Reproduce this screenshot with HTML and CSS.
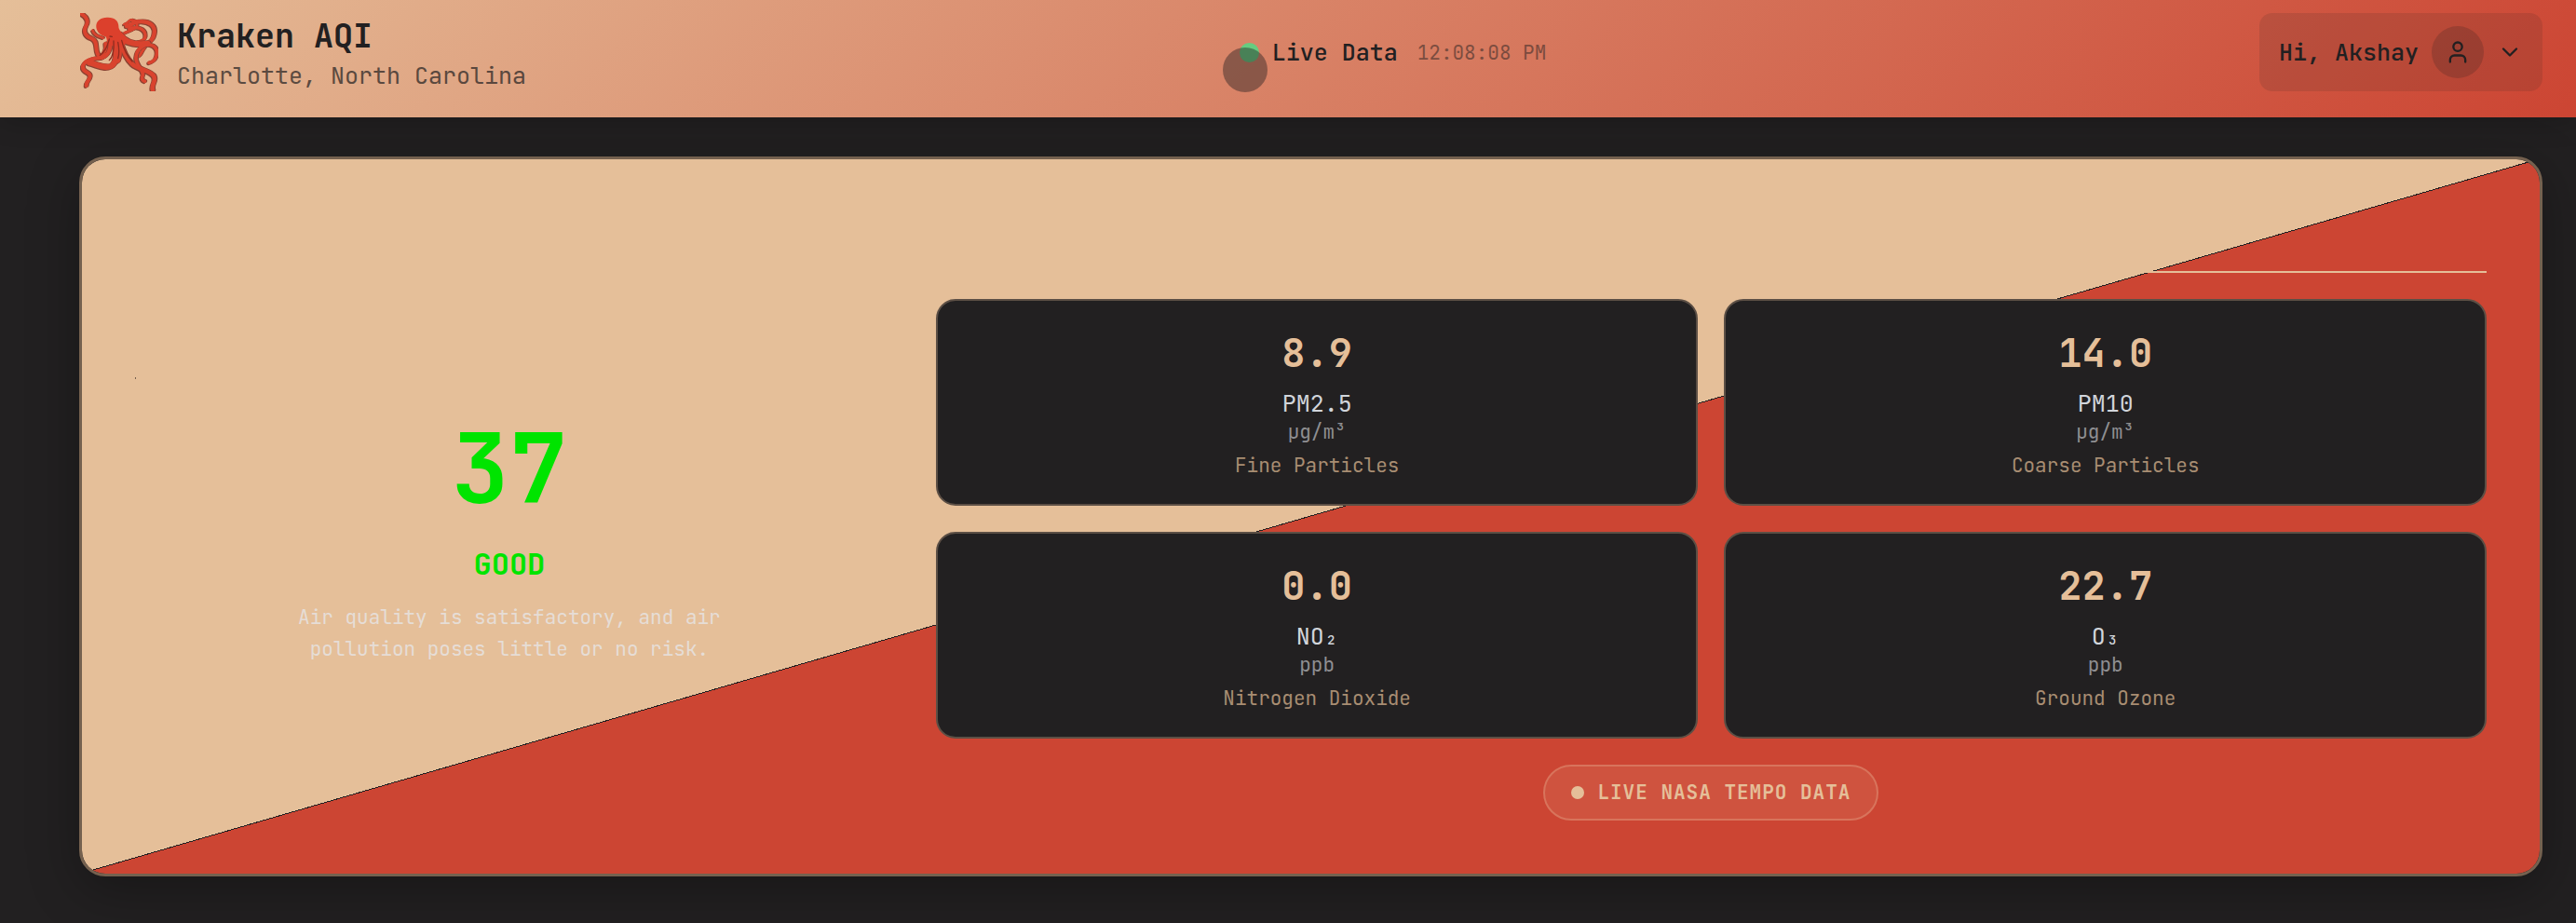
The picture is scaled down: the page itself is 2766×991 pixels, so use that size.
FILE: index.html
```html
<!DOCTYPE html>
<html lang="en">
<head>
<meta charset="utf-8">
<meta name="viewport" content="width=device-width, initial-scale=1">
<title>Kraken AQI</title>
<link rel="stylesheet" href="styles.css">
</head>
<body>
<header class="topbar">
  <div class="brand">
    <svg class="logo" viewBox="78 42 252 252" aria-hidden="true">
      <defs>
        <g id="arms-back">
          <path d="M212 112 C230 98 242 102 256 90 C268 80 258 66 244 64 C232 64 236 76 220 78" stroke-width="8"/>
          <path d="M228 84 C250 82 246 68 266 70 C300 66 324 82 316 112 C310 138 290 142 262 142" stroke-width="13"/>
          <path d="M236 92 C262 84 286 92 288 112 C290 128 276 134 262 136" stroke-width="10"/>
          <path d="M152 122 C134 116 122 112 118 98" stroke-width="8"/>
          <path d="M262 184 C276 180 276 162 286 154" stroke-width="9"/>
          <path d="M160 140 C164 158 158 172 142 184" stroke-width="12"/>
        </g>
        <g id="arms-front">
          <path d="M83 45 C100 54 106 70 97 84 C86 104 98 118 116 124 C136 132 126 156 134 172 C138 184 150 184 158 176" stroke-width="12"/>
          <path d="M176 136 C176 162 166 182 148 186 C124 188 96 190 87 212 C82 234 112 230 110 246 C108 262 98 260 98 276" stroke-width="12"/>
          <path d="M192 136 C194 166 200 196 180 212 C156 224 132 206 108 202" stroke-width="18"/>
          <path d="M206 112 C222 136 248 146 296 140" stroke-width="18"/>
          <path d="M208 132 C216 164 226 188 246 206 C268 226 306 226 316 246 C324 264 306 270 312 290" stroke-width="14"/>
          <path d="M300 202 C326 198 334 160 314 148 C290 136 260 154 258 184 C256 212 284 226 280 242 C274 254 280 260 286 262" stroke-width="11"/>
          <path d="M206 134 C206 160 208 176 200 196" stroke-width="14"/>
        </g>
      </defs>
      <g fill="none" stroke-linecap="round" stroke-linejoin="round">
        <g class="logo-edge"><use href="#arms-back" x="-3" y="3"/><use href="#arms-back" x="3" y="-1"/></g>
        <use class="logo-ink" href="#arms-back"/>
        <g class="logo-edge"><use href="#arms-front" x="-3" y="3"/><use href="#arms-front" x="3" y="-1"/></g>
        <use class="logo-ink" href="#arms-front"/>
      </g>
      <path class="logo-body" d="M130 88 C128 66 146 55 168 56 C190 56 202 68 202 84 C202 98 212 104 224 116 C232 126 226 146 212 152 C200 144 184 148 172 146 C160 136 168 128 160 118 C144 114 132 104 130 88 Z"/>
      <g class="logo-crease">
        <path d="M186 132 C188 160 186 180 172 194"/>
        <path d="M200 136 C204 156 204 176 200 188"/>
        <path d="M172 126 C166 150 158 168 142 178"/>
        <path d="M212 130 C218 156 228 180 246 198"/>
        <path d="M174 117 L181 118"/>
      </g>
    </svg>
    <div>
      <h1 class="brand-name">Kraken AQI</h1>
      <p class="brand-place">Charlotte, North Carolina</p>
    </div>
  </div>
  <div class="live">
    <span class="live-dot"><span class="live-pulse"></span></span>
    <span class="live-label">Live Data</span>
    <time class="live-time">12:08:08 PM</time>
  </div>
  <button class="user" type="button">
    <span>Hi, Akshay</span>
    <span class="avatar">
      <svg class="icon" viewBox="0 0 24 24" aria-hidden="true"><path d="M19 21v-2a4 4 0 0 0-4-4H9a4 4 0 0 0-4 4v2"/><circle cx="12" cy="7" r="4"/></svg>
    </span>
    <svg class="icon" viewBox="0 0 24 24" aria-hidden="true"><path d="m6 9 6 6 6-6"/></svg>
  </button>
</header>
<main class="page">
  <section class="panel">
    <div class="summary">
      <span class="summary-mark"></span>
      <p class="aqi">37</p>
      <p class="level">GOOD</p>
      <p class="advice">Air quality is satisfactory, and air pollution poses little or no risk.</p>
    </div>
    <div class="readings">
      <div class="readings-head"></div>
      <div class="tiles">
        <article class="tile">
          <p class="value">8.9</p>
          <h2 class="name">PM2.5</h2>
          <p class="unit">µg/m³</p>
          <p class="note">Fine Particles</p>
        </article>
        <article class="tile">
          <p class="value">14.0</p>
          <h2 class="name">PM10</h2>
          <p class="unit">µg/m³</p>
          <p class="note">Coarse Particles</p>
        </article>
        <article class="tile">
          <p class="value">0.0</p>
          <h2 class="name">NO<sub>2</sub></h2>
          <p class="unit">ppb</p>
          <p class="note">Nitrogen Dioxide</p>
        </article>
        <article class="tile">
          <p class="value">22.7</p>
          <h2 class="name">O<sub>3</sub></h2>
          <p class="unit">ppb</p>
          <p class="note">Ground Ozone</p>
        </article>
      </div>
      <p class="badge"><span class="badge-dot"></span>LIVE NASA TEMPO DATA</p>
    </div>
  </section>
</main>
</body>
</html>
```

FILE: styles.css
```css
:root {
  --tan: #e5bf99;
  --red: #cc4533;
  --ink: #222021;
  --edge: #75614f;
}

* {
  box-sizing: border-box;
}

body {
  margin: 0;
  min-height: 100vh;
  background: var(--ink);
  color: var(--ink);
  font-family: "JetBrains Mono", "DejaVu Sans Mono", monospace;
  font-size: 25px;
}

h1,
h2,
p {
  margin: 0;
}

/* Top bar */
.topbar {
  position: relative;
  display: flex;
  align-items: center;
  justify-content: space-between;
  padding: 14px 36px 28px 86px;
  background: linear-gradient(135deg, var(--tan), var(--red));
  box-shadow: 0 4px 28px rgba(0, 0, 0, 0.2);
}

.brand {
  display: flex;
  align-items: center;
  gap: 20px;
}

.logo {
  width: 84px;
  height: 84px;
}

.logo-edge {
  stroke: #8a4232;
}

.logo-ink {
  stroke: #d9432e;
}

.logo-body {
  fill: #dc402c;
}

.logo-crease {
  fill: none;
  stroke: #8f2c20;
  stroke-width: 4;
  stroke-linecap: round;
}

.brand-name {
  font-size: 35px;
  font-weight: 700;
  line-height: 50px;
}

.brand-place {
  font-size: 25px;
  line-height: 34px;
  opacity: 0.7;
}

.live {
  display: flex;
  align-items: center;
}

.live-dot {
  position: relative;
  width: 21px;
  height: 21px;
  margin-right: 14px;
  border-radius: 50%;
  background: #66cc80;
}

.live-pulse {
  position: absolute;
  top: 5px;
  left: -18px;
  width: 48px;
  height: 48px;
  border-radius: 50%;
  background: rgba(35, 31, 32, 0.43);
}

.live-label {
  margin-right: 21px;
  font-weight: 500;
}

.live-time {
  font-size: 21px;
  opacity: 0.5;
}

.user {
  display: flex;
  align-items: center;
  gap: 14px;
  padding: 14px 21px;
  border: 0;
  border-radius: 14px;
  background: rgba(35, 31, 32, 0.12);
  color: inherit;
  font: inherit;
  font-weight: 500;
}

.avatar {
  display: grid;
  place-items: center;
  width: 56px;
  height: 56px;
  border-radius: 50%;
  background: rgba(35, 31, 32, 0.2);
}

.icon {
  width: 28px;
  height: 28px;
  fill: none;
  stroke: currentColor;
  stroke-width: 2;
  stroke-linecap: round;
  stroke-linejoin: round;
}

/* Main panel */
.page {
  padding: 42px 36px 50px 85px;
}

.panel {
  display: grid;
  grid-template-columns: 14fr 29fr;
  gap: 56px;
  padding: 57px;
  border: 3px solid var(--edge);
  border-radius: 28px;
  background: linear-gradient(to bottom right, var(--tan) calc(50% - 1px), var(--ink) calc(50% - 1px) 50%, var(--red) 50%) padding-box;
  box-shadow: 0 14px 56px rgba(0, 0, 0, 0.3);
}

.summary {
  display: flex;
  flex-direction: column;
  align-items: center;
  justify-content: center;
  padding-top: 10px;
  text-align: center;
}

.summary-mark {
  align-self: flex-start;
  width: 1px;
  height: 2px;
  margin-bottom: 44px;
  background: var(--edge);
}

.aqi {
  color: #00e400;
  font-size: 104px;
  font-weight: 700;
  line-height: 104px;
}

.level {
  margin: 31px 0 20px;
  color: #00e400;
  font-size: 32px;
  font-weight: 700;
  line-height: 40px;
}

.advice {
  max-width: 476px;
  color: #e6ddd6;
  font-size: 21px;
  line-height: 34px;
}

.readings-head {
  height: 65px;
  margin-bottom: 28px;
  border-bottom: 2px solid var(--tan);
}

.tiles {
  display: grid;
  grid-template-columns: 1fr 1fr;
  gap: 28px;
}

.tile {
  padding: 28px 28px 27px;
  border: 2px solid #5c4f45;
  border-radius: 21px;
  background: var(--ink);
  text-align: center;
}

.value {
  color: var(--tan);
  font-size: 42px;
  font-weight: 700;
  line-height: 56px;
}

.name {
  margin-top: 9px;
  color: #d1d5db;
  font-size: 25px;
  font-weight: 400;
  line-height: 34px;
}

.name sub {
  display: inline-block;
  width: 15px;
  font-size: 14px;
  font-weight: 500;
  line-height: 14px;
  vertical-align: baseline;
}

.unit {
  color: #8f8f92;
  font-size: 21px;
  line-height: 28px;
}

.note {
  margin-top: 8px;
  color: #a88d72;
  font-size: 21px;
  line-height: 28px;
}

.badge {
  display: flex;
  align-items: center;
  gap: 14px;
  width: fit-content;
  margin: 28px auto 0;
  padding: 14px 28px;
  border: 2px solid #d8745c;
  border-radius: 30px;
  background: #cf533f;
  color: var(--tan);
  font-size: 21px;
  font-weight: 600;
  letter-spacing: 1px;
  line-height: 28px;
}

.badge-dot {
  width: 14px;
  height: 14px;
  border-radius: 50%;
  background: var(--tan);
}
```
